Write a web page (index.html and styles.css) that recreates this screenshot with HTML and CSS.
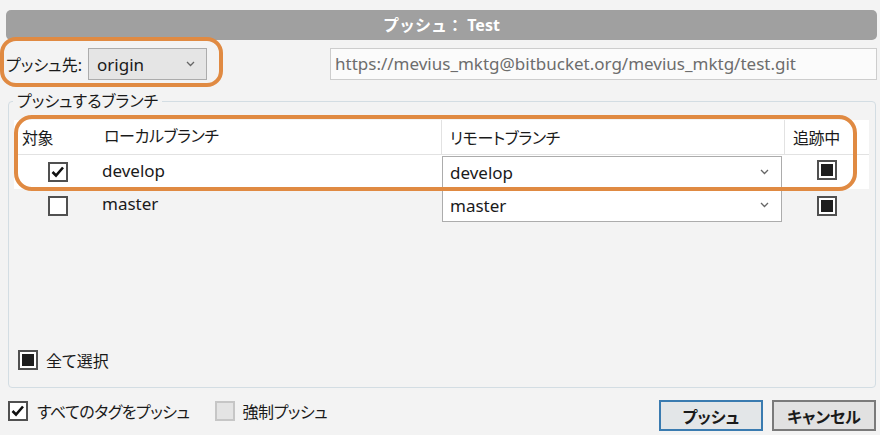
FILE: index.html
```html
<!DOCTYPE html>
<html lang="ja">
<head>
<meta charset="utf-8">
<link rel="stylesheet" href="styles.css">
</head>
<body>
<div class="dialog">
  <div class="title">プッシュ： Test</div>
  <div class="remote-row">
    <span class="label">プッシュ先:</span>
    <div class="combo combo-origin"><span class="lat">origin</span><svg class="chev" width="9" height="6" viewBox="0 0 9 6"><polyline points="1,1 4.5,4.5 8,1" fill="none" stroke="#666" stroke-width="1.3"/></svg></div>
    <div class="url lat">https://mevius_mktg@bitbucket.org/mevius_mktg/test.git</div>
  </div>
  <fieldset class="group">
    <legend>プッシュするブランチ</legend>
    <div class="group-body">
      <div class="table">
        <div class="row head">
          <div class="c1">対象</div>
          <div class="c2">ローカルブランチ</div>
          <div class="c3">リモートブランチ</div>
          <div class="c4">追跡中</div>
        </div>
        <div class="row sel">
          <div class="c1"><span class="cb"><svg width="16" height="16" viewBox="0 0 16 16"><polyline points="2.5,8 6,11.5 13,3.5" fill="none" stroke="#111" stroke-width="2.6"/></svg></span></div>
          <div class="c2 lat">develop</div>
          <div class="c3"><div class="combo rcombo"><span class="lat">develop</span><svg class="chev" width="9" height="6" viewBox="0 0 9 6"><polyline points="1,1 4.5,4.5 8,1" fill="none" stroke="#666" stroke-width="1.3"/></svg></div></div>
          <div class="c4"><span class="cb ind"><i></i></span></div>
        </div>
        <div class="row r2">
          <div class="c1"><span class="cb"></span></div>
          <div class="c2 lat">master</div>
          <div class="c3"><div class="combo rcombo"><span class="lat">master</span><svg class="chev" width="9" height="6" viewBox="0 0 9 6"><polyline points="1,1 4.5,4.5 8,1" fill="none" stroke="#666" stroke-width="1.3"/></svg></div></div>
          <div class="c4"><span class="cb ind"><i></i></span></div>
        </div>
      </div>
      <div class="selall"><span class="cb ind"><i></i></span><span>全て選択</span></div>
    </div>
  </fieldset>
  <div class="footer">
    <div class="opt"><span class="cb"><svg width="16" height="16" viewBox="0 0 16 16"><polyline points="2.5,8 6,11.5 13,3.5" fill="none" stroke="#111" stroke-width="2.6"/></svg></span><span>すべてのタグをプッシュ</span></div>
    <div class="opt opt-force"><span class="cb dis"></span><span>強制プッシュ</span></div>
    <div class="btn primary">プッシュ</div>
    <div class="btn">キャンセル</div>
  </div>
  <div class="hl hl1"></div>
  <div class="hl hl2"></div>
</div>
</body>
</html>
```
FILE: styles.css
```css
* { box-sizing: border-box; }
html, body { margin: 0; padding: 0; }
body {
  background: #f3f3f3;
  font-family: "Noto Sans", "Noto Sans CJK JP", sans-serif;
  font-size: 16px;
  color: #1a1a1a;
  font-feature-settings: "palt";
}
.lat { font-size: 17px; }
.dialog {
  position: relative;
  width: 880px;
  height: 435px;
  padding-top: 10px;
  overflow: hidden;
}
.title {
  height: 30px;
  margin: 0 3px 0 6px;
  background: #a0a0a0;
  border-radius: 5px;
  color: #fff;
  font-weight: bold;
  font-size: 16px;
  line-height: 30px;
  text-align: center;
  font-feature-settings: normal;
}
.remote-row {
  display: flex;
  align-items: center;
  height: 32px;
  margin-top: 8px;
  padding: 0 3px 0 6px;
}
.label { width: 82px; }
.combo {
  display: flex;
  align-items: center;
  justify-content: space-between;
  height: 32px;
  border: 1px solid #acacac;
}
.combo-origin {
  width: 119px;
  background: #e5e5e5;
  padding: 0 11px 0 8px;
}
.url {
  margin-left: auto;
  width: 547px;
  height: 32px;
  line-height: 30px;
  border: 1px solid #cdcdcd;
  background: #fbfbfb;
  color: #6d6d6d;
  padding-left: 4px;
  white-space: nowrap;
}
.group {
  margin: 10px 4px 0 8px;
  padding: 0 6px 0 5px;
  border: 1px solid #d3dde3;
  border-radius: 4px;
  min-width: 0;
}
.group legend {
  padding: 0 4px;
  margin-left: -1px;
  line-height: 22px;
}
.group-body {
  display: flex;
  flex-direction: column;
  height: 275px;
  padding-top: 8px;
}
.table { display: flex; flex-direction: column; }
.row {
  display: grid;
  grid-template-columns: 81px 346px 343px 84px;
  align-items: center;
}
.row.head {
  height: 35px;
  background: #fff;
  border-bottom: 1px solid #e2e2e2;
}
.row.head > div { height: 100%; display: flex; align-items: center; padding-left: 8px; letter-spacing: -0.4px; }
.row.head .c2 { padding-left: 9px; }
.row.head .c3, .row.head .c4 { border-left: 1px solid #e2e2e2; }
.row.sel { height: 34px; background: #fff; }
.row.r2 { height: 33px; }
.row .c1 { padding-left: 34px; display: flex; }
.row .c2 { padding-left: 7px; margin-top: -4px; }
.row .c3 { padding-left: 1px; }
.row .c4 { display: flex; justify-content: center; padding-left: 1px; }
.row.head .c4 { justify-content: flex-start; }
.rcombo {
  width: 340px;
  height: 33px;
  background: #fff;
  padding: 0 12px 0 7px;
}
.row.r2 .rcombo { margin-top: -1px; }
.cb {
  display: inline-flex;
  align-items: center;
  justify-content: center;
  width: 20px;
  height: 20px;
  border: 2px solid #505050;
  background: #fff;
  flex: none;
}
.cb.ind i {
  display: block;
  width: 12px;
  height: 12px;
  background: #1e1e1e;
}
.cb.dis { border: 2px solid #c6c6c6; background: #e4e4e4; }
.row.sel .c4 .cb { margin-top: -4px; }
.selall {
  margin-top: auto;
  margin-bottom: 15px;
  margin-left: 4px;
  display: flex;
  align-items: center;
  gap: 8px;
}
.footer {
  display: flex;
  align-items: flex-start;
  margin-top: 12px;
  padding: 0 4px 0 8px;
}
.opt { display: flex; align-items: center; gap: 9px; height: 21px; letter-spacing: -0.5px; }
.opt-force { margin-left: 25px; gap: 8px; }
.btn {
  width: 104px;
  height: 31px;
  border: 2px solid #7a7a7a;
  background: #e1e1e1;
  font-weight: bold;
  display: flex;
  align-items: center;
  justify-content: center;
}
.btn.primary { margin-left: auto; margin-right: 9px; border-color: #3a7bb0; background: #e3e6e8; }
.hl {
  position: absolute;
  border: 4px solid #e08a42;
  pointer-events: none;
}
.hl1 { left: 0; top: 37px; width: 223px; height: 50px; border-radius: 16px; }
.hl2 { left: 14px; top: 115px; width: 843px; height: 76px; border-radius: 18px; }
```
